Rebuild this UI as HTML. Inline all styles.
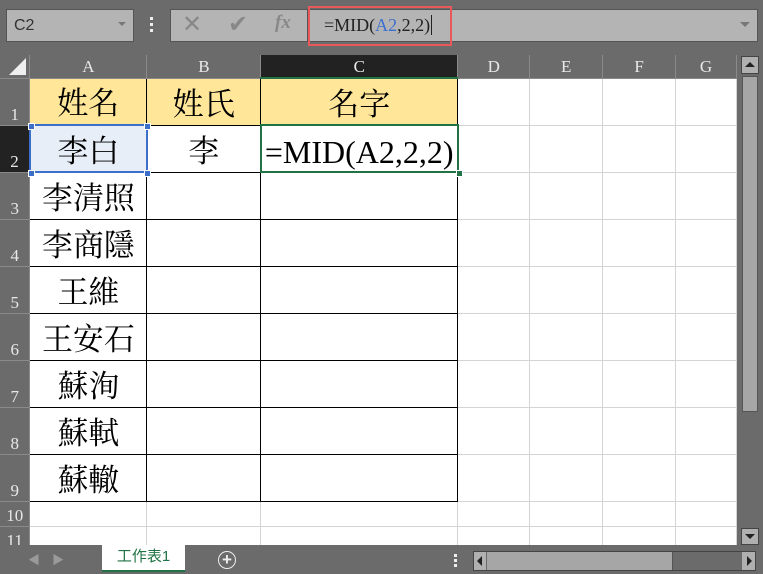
<!DOCTYPE html>
<html><head><meta charset="utf-8"><style>
body{margin:0;width:763px;height:574px;background:#6b6b6b;position:relative;overflow:hidden;font-family:"Liberation Serif","Noto Serif CJK TC","Noto Serif CJK SC",serif}
.abs{position:absolute}
#grid{position:absolute;left:0;top:55px;width:737px;height:490px;overflow:hidden;background:#fff}
table{border-collapse:collapse;table-layout:fixed}
td{padding:0;border:1px solid #d4d4d4;text-align:center;font-size:31px;line-height:36px;padding-top:6px;color:#000;overflow:hidden;white-space:nowrap;box-sizing:border-box}
td.h{background:#6b6b6b;color:#e8e8e8;font-size:17px;line-height:20px;padding-top:2px;border:1px solid #8a8a8a;border-top:none}
td.rh{background:#6b6b6b;color:#e8e8e8;font-size:17px;line-height:20px;padding-top:0;text-align:center;vertical-align:bottom;border:1px solid #8a8a8a;border-left:none}
td.sel{background:#222}
td.y{background:#ffe699}
td.b{border:1px solid #000}
</style></head><body>
<div class="abs" style="left:6px;top:9px;width:126px;height:31px;background:#b4b4b4;border:1px solid #555;font-family:'Liberation Sans',sans-serif;font-size:16px;color:#333;line-height:31px;text-indent:7px">C2</div>
<div class="abs" style="left:118px;top:22px;width:0;height:0;border-left:4px solid transparent;border-right:4px solid transparent;border-top:4px solid #777"></div>
<div class="abs" style="left:150px;top:17px;width:3px;height:3px;background:#eee;box-shadow:0 6px 0 #eee,0 12px 0 #eee"></div>
<div class="abs" style="left:170px;top:9px;width:136px;height:31px;background:#b4b4b4;border:1px solid #555"></div>
<div class="abs" style="left:182px;top:10px;font-family:'Liberation Sans',sans-serif;font-size:24px;color:#888">✕</div>
<div class="abs" style="left:228px;top:10px;font-family:'Liberation Sans',sans-serif;font-size:24px;color:#888">✔</div>
<div class="abs" style="left:275px;top:12px;font-style:italic;font-weight:bold;font-size:19px;color:#888">fx</div>
<div class="abs" style="left:308px;top:9px;width:448px;height:31px;background:#b4b4b4;border:1px solid #555"></div>
<div class="abs" style="left:740px;top:22px;width:0;height:0;border-left:5px solid transparent;border-right:5px solid transparent;border-top:5px solid #777"></div>
<div class="abs" style="left:308px;top:6px;width:144px;height:40px;border:2px solid #e85a5a;box-sizing:border-box"></div>
<div class="abs" style="left:324px;top:15px;font-size:18px;color:#222;line-height:20px">=MID(<span style="color:#3a6fd0">A2</span>,2,2)<span style="border-left:1px solid #222;margin-left:1px"></span></div>
<div id="grid">
<table>
<colgroup><col style="width:30px"><col style="width:117px"><col style="width:114px"><col style="width:197px"><col style="width:72px"><col style="width:73px"><col style="width:73px"><col style="width:61px"></colgroup>
<tr style="height:23px"><td class="h" style="position:relative;border-left:none"><div style="position:absolute;right:3px;bottom:3px;width:0;height:0;border-left:17px solid transparent;border-bottom:17px solid #f0f0f0"></div></td><td class="h">A</td><td class="h">B</td><td class="h sel" style="border-bottom:2px solid #217346">C</td><td class="h">D</td><td class="h">E</td><td class="h">F</td><td class="h">G</td></tr>
<tr style="height:47px"><td class="rh">1</td><td class="y b">姓名</td><td class="y b">姓氏</td><td class="y b">名字</td><td></td><td></td><td></td><td></td></tr>
<tr style="height:47px"><td class="rh sel">2</td><td class="b" style="background:#e8eef8;border:2px solid #3b6fc8">李白</td><td class="b">李</td><td style="border:2px solid #217346;text-align:left;font-size:32px;padding-left:3px">=MID(A2,2,2)</td><td></td><td></td><td></td><td></td></tr>
<tr style="height:47px"><td class="rh">3</td><td class="b">李清照</td><td class="b"></td><td class="b"></td><td></td><td></td><td></td><td></td></tr>
<tr style="height:47px"><td class="rh">4</td><td class="b">李商隱</td><td class="b"></td><td class="b"></td><td></td><td></td><td></td><td></td></tr>
<tr style="height:47px"><td class="rh">5</td><td class="b">王維</td><td class="b"></td><td class="b"></td><td></td><td></td><td></td><td></td></tr>
<tr style="height:47px"><td class="rh">6</td><td class="b">王安石</td><td class="b"></td><td class="b"></td><td></td><td></td><td></td><td></td></tr>
<tr style="height:47px"><td class="rh">7</td><td class="b">蘇洵</td><td class="b"></td><td class="b"></td><td></td><td></td><td></td><td></td></tr>
<tr style="height:47px"><td class="rh">8</td><td class="b">蘇軾</td><td class="b"></td><td class="b"></td><td></td><td></td><td></td><td></td></tr>
<tr style="height:47px"><td class="rh">9</td><td class="b">蘇轍</td><td class="b"></td><td class="b"></td><td></td><td></td><td></td><td></td></tr>
<tr style="height:25px"><td class="rh">10</td><td></td><td></td><td></td><td></td><td></td><td></td><td></td></tr>
<tr style="height:25px"><td class="rh">11</td><td></td><td></td><td></td><td></td><td></td><td></td><td></td></tr>
</table>
</div>
<div class="abs" style="left:28px;top:123px;width:5px;height:5px;background:#3b6fc8;border:1px solid #fff"></div>
<div class="abs" style="left:144px;top:123px;width:5px;height:5px;background:#3b6fc8;border:1px solid #fff"></div>
<div class="abs" style="left:28px;top:170px;width:5px;height:5px;background:#3b6fc8;border:1px solid #fff"></div>
<div class="abs" style="left:144px;top:170px;width:5px;height:5px;background:#3b6fc8;border:1px solid #fff"></div>
<div class="abs" style="left:456px;top:170px;width:5px;height:5px;background:#217346;border:1px solid #fff"></div>
<div class="abs" style="left:740px;top:55px;width:20px;height:490px;background:#6b6b6b"></div>
<div class="abs" style="left:741px;top:56px;width:18px;height:18px;background:#b0b0b0;border:1px solid #444;box-sizing:border-box"></div>
<div class="abs" style="left:745px;top:62px;border-left:5px solid transparent;border-right:5px solid transparent;border-bottom:5px solid #222"></div>
<div class="abs" style="left:742px;top:76px;width:16px;height:336px;background:#a6a6a6;border:1px solid #555;box-sizing:border-box"></div>
<div class="abs" style="left:741px;top:528px;width:18px;height:17px;background:#b0b0b0;border:1px solid #444;box-sizing:border-box"></div>
<div class="abs" style="left:745px;top:534px;border-left:5px solid transparent;border-right:5px solid transparent;border-top:5px solid #222"></div>
<div class="abs" style="left:0;top:545px;width:763px;height:29px;background:#6b6b6b"></div>
<div class="abs" style="left:28px;top:551px;color:#9a9a9a;font-size:12px">◀</div>
<div class="abs" style="left:52px;top:551px;color:#9a9a9a;font-size:12px">▶</div>
<div class="abs" style="left:102px;top:545px;width:83px;height:25px;background:#fff;border-bottom:2px solid #217346;color:#217346;font-family:'Liberation Sans','Noto Sans CJK TC',sans-serif;font-size:15px;text-align:center;line-height:24px">工作表1</div>
<div class="abs" style="left:218px;top:551px;width:16px;height:16px;border:1.5px solid #eee;border-radius:50%;color:#eee;font-family:'Liberation Sans',sans-serif;font-size:17px;line-height:15px;text-align:center;font-weight:bold">+</div>
<div class="abs" style="left:454px;top:554px;width:3px;height:3px;background:#eee;box-shadow:0 5px 0 #eee,0 10px 0 #eee"></div>
<div class="abs" style="left:473px;top:551px;width:283px;height:20px;background:#6b6b6b;border:1px solid #444;box-sizing:border-box"></div>
<div class="abs" style="left:474px;top:552px;width:12px;height:18px;background:#b0b0b0"></div>
<div class="abs" style="left:477px;top:556px;border-top:5px solid transparent;border-bottom:5px solid transparent;border-right:5px solid #222"></div>
<div class="abs" style="left:487px;top:552px;width:185px;height:18px;background:#a6a6a6;border-right:1px solid #555"></div>
<div class="abs" style="left:742px;top:552px;width:13px;height:18px;background:#b0b0b0"></div>
<div class="abs" style="left:747px;top:556px;border-top:5px solid transparent;border-bottom:5px solid transparent;border-left:5px solid #222"></div>
</body></html>
